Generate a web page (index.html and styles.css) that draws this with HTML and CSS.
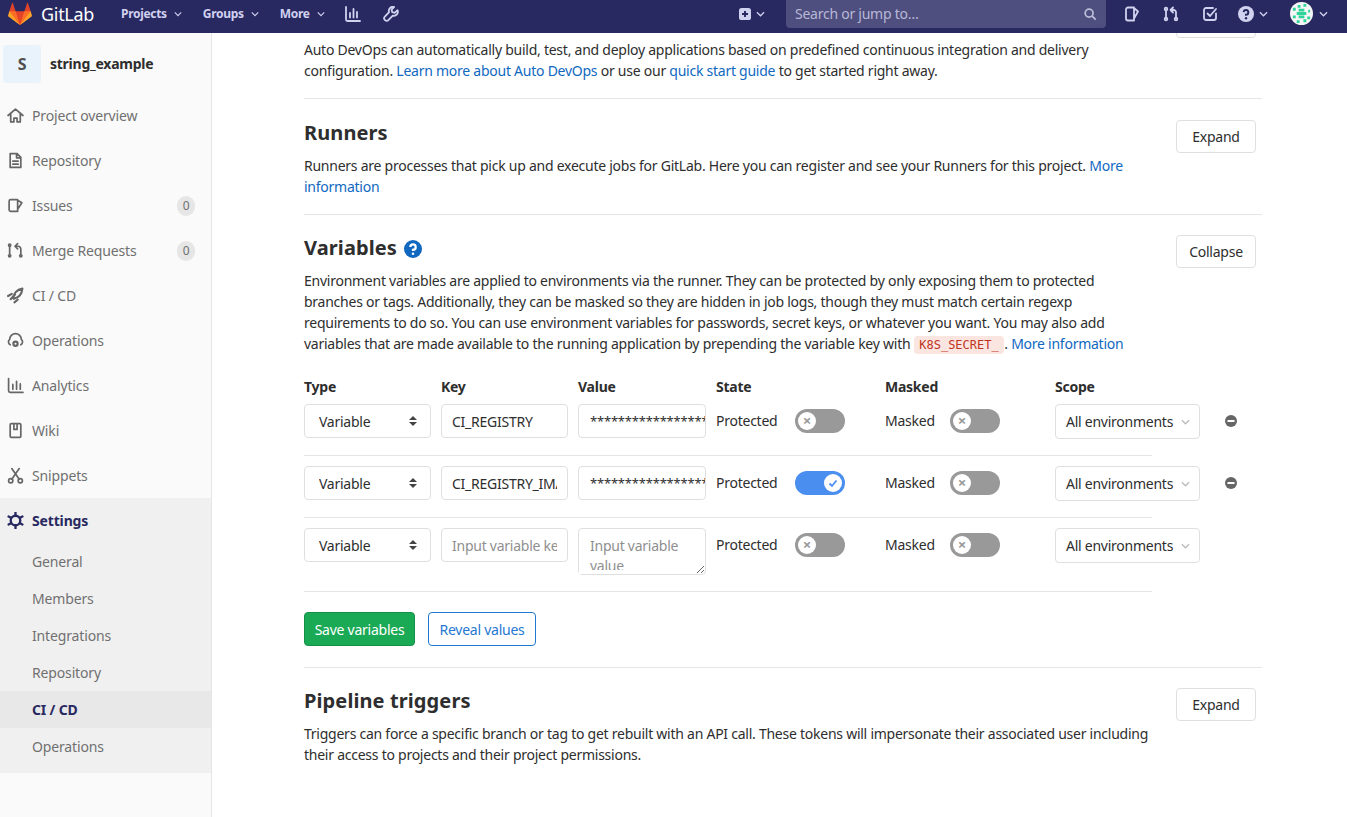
FILE: index.html

```html
<!DOCTYPE html>
<html lang="en">
<head>
    <meta charset="UTF-8">
    <meta name="viewport" content="width=device-width, initial-scale=1.0">
    <title>CI / CD Settings · string_example · GitLab</title>
    <link rel="stylesheet" href="styles.css">
</head>
<body>

<!-- Top navigation -->
<header class="navbar">
    <a class="brand">
        <svg class="brand-logo" viewBox="0 0 36 36">
            <path fill="#e24329" d="M2 14l9.38 9v-9l-4-12.28c-.205-.632-1.176-.632-1.38 0z"/>
            <path fill="#e24329" d="M34 14l-9.38 9v-9l4-12.28c.205-.632 1.176-.632 1.38 0z"/>
            <path fill="#e24329" d="M18 34.38 3 14h30z"/>
            <path fill="#fc6d26" d="M18 34.38 11.38 14H2l4 11z"/>
            <path fill="#fc6d26" d="M18 34.38 24.62 14H34l-4 11z"/>
            <path fill="#fca326" d="M2 14 .1 20.16c-.18.565 0 1.2.5 1.56l17.42 12.66z"/>
            <path fill="#fca326" d="M34 14l1.9 6.16c.18.565 0 1.2-.5 1.56L18 34.38z"/>
        </svg>
        <span class="brand-name">GitLab</span>
    </a>
    <nav class="nav-left">
        <a class="nav-link">Projects <svg class="caret" viewBox="0 0 10 6"><path d="M1 1l4 4 4-4"/></svg></a>
        <a class="nav-link">Groups <svg class="caret" viewBox="0 0 10 6"><path d="M1 1l4 4 4-4"/></svg></a>
        <a class="nav-link">More <svg class="caret" viewBox="0 0 10 6"><path d="M1 1l4 4 4-4"/></svg></a>
        <svg class="nav-icon chart" viewBox="0 0 16 16"><path d="M1 1v12.5a1.5 1.5 0 0 0 1.500 1.500H15M5 7v4.500M8.500 3v8.500M12 6v5.500"/></svg>
        <svg class="nav-icon wrench" viewBox="0 0 16 16"><path d="M14.500 4.200l-2.800 2.600-2.500-.7-.7-2.500 2.600-2.600a4 4 0 0 0-5 5.200L1.600 10.900a1.900 1.900 0 0 0 0 2.700l.8.800a1.900 1.900 0 0 0 2.700 0L9.800 9.700a4 4 0 0 0 4.700-5.500z"/></svg>
    </nav>
    <div class="nav-right">
        <a class="nav-plus">
            <svg class="plus-box" viewBox="0 0 14 14"><rect width="14" height="14" rx="3" fill="#d1d1f0"/><path d="M7 3.500v7M3.500 7h7" stroke="#292961" stroke-width="2.200"/></svg>
            <svg class="caret" viewBox="0 0 10 6"><path d="M1 1l4 4 4-4"/></svg>
        </a>
        <div class="search">
            <span>Search or jump to…</span>
            <svg class="search-icon" viewBox="0 0 16 16"><circle cx="7" cy="7" r="4.500"/><path d="M10.500 10.500l4 4"/></svg>
        </div>
        <svg class="nav-icon issues" viewBox="0 0 16 16"><path d="M10 1.500H4a2 2 0 0 0-2 2v9a2 2 0 0 0 2 2h6zM10 2l4 3.500-4 7"/></svg>
        <svg class="nav-icon merge" viewBox="0 0 16 16"><circle cx="3" cy="3" r="1.300"/><circle cx="3" cy="13" r="1.300"/><circle cx="13" cy="13" r="1.300"/><path d="M3 4.500v7M13 11.500V6.500a2.500 2.500 0 0 0-2.500-2.500H8M10 1.500 7.500 4l2.500 2.500"/></svg>
        <svg class="nav-icon todo" viewBox="0 0 16 16"><path d="M14 7.500V12a2 2 0 0 1-2 2H4a2 2 0 0 1-2-2V4a2 2 0 0 1 2-2h7M5.500 7.500 8 10l6-7"/></svg>
        <a class="nav-help">
            <svg class="help-icon" viewBox="0 0 16 16"><circle cx="8" cy="8" r="8" fill="#d1d1f0"/><path d="M5.700 6.200A2.300 2.300 0 1 1 8 8.700v1" fill="none" stroke="#292961" stroke-width="2"/><circle cx="8" cy="12.200" r="1.200" fill="#292961"/></svg>
            <svg class="caret" viewBox="0 0 10 6"><path d="M1 1l4 4 4-4"/></svg>
        </a>
        <a class="nav-user">
            <svg class="avatar" viewBox="0 0 24 24">
                <circle cx="12" cy="12" r="12" fill="#f6f6f6"/>
                <path fill="#2fd49b" d="M8 3h3v3H8zM14 2h3v3h-3zM3 6h3v3H3zM19 8h2v3h-2zM9 7h6v3H9zM7 10.500h10v3H7zM9 14h6v3H9zM3 14h3v3H3zM18 15h3v3h-3zM7 19h3v3H7zM14 18h3v3h-3z"/>
            </svg>
            <svg class="caret" viewBox="0 0 10 6"><path d="M1 1l4 4 4-4"/></svg>
        </a>
    </div>
</header>

<div class="layout">

    <!-- Project sidebar -->
    <aside class="sidebar">
        <div class="project-head">
            <div class="project-avatar">S</div>
            <div class="project-name">string_example</div>
        </div>
        <ul class="side-list">
            <li class="side-item">
                <svg class="side-icon" viewBox="0 0 16 16"><path d="M1 8 8 2l7 6M3.500 6.500V14h3v-3.500h3V14h3V6.500"/></svg>
                Project overview
            </li>
            <li class="side-item">
                <svg class="side-icon" viewBox="0 0 16 16"><path d="M3 1.500h6.500L13 5v9.500H3zM5.500 8.500h5M5.500 11.500h5M9 2v3.500h4"/></svg>
                Repository
            </li>
            <li class="side-item">
                <svg class="side-icon" viewBox="0 0 16 16"><path d="M10 2.500H3.500a1.500 1.500 0 0 0-1.500 1.500v8a1.500 1.500 0 0 0 1.500 1.500H10zM10 3l4 2.500-4 6"/></svg>
                Issues
                <span class="badge">0</span>
            </li>
            <li class="side-item">
                <svg class="side-icon" viewBox="0 0 16 16"><circle cx="2.500" cy="3" r="1"/><circle cx="2.500" cy="13" r="1"/><circle cx="13" cy="13" r="1"/><path d="M2.500 4v8M13 12V6.500A2.500 2.500 0 0 0 10.500 4H8M10 1.500 7.500 4 10 6.500"/></svg>
                Merge Requests
                <span class="badge">0</span>
            </li>
            <li class="side-item">
                <svg class="side-icon rocket" viewBox="0 0 16 16"><path d="M6 10.500C6 6 9.500 2.500 14.500 1.500c-.5 5-3.500 8.500-8 9.500zM1 8.500l3.500-2M7 14.500l3-2.500M3.500 11.500l4-4.500"/></svg>
                CI / CD
            </li>
            <li class="side-item">
                <svg class="side-icon" viewBox="0 0 16 16"><path d="M3 12A3 3 0 0 1 2.500 7 5.500 5.500 0 0 1 13.500 7a3 3 0 0 1-.5 5"/><circle cx="8" cy="11" r="2" stroke-width="2"/></svg>
                Operations
            </li>
            <li class="side-item">
                <svg class="side-icon" viewBox="0 0 16 16"><path d="M1.500 1.500V13a1.500 1.500 0 0 0 1.500 1.500h12M5.500 7v4.500M9 4v7.500M12.500 6.500v5"/></svg>
                Analytics
            </li>
            <li class="side-item">
                <svg class="side-icon" viewBox="0 0 16 16"><path d="M4 1.500h8a1 1 0 0 1 1 1v11a1 1 0 0 1-1 1H4a1 1 0 0 1-1-1v-11a1 1 0 0 1 1-1zM6.500 2v5h3V2" stroke-linejoin="round"/></svg>
                Wiki
            </li>
            <li class="side-item">
                <svg class="side-icon" viewBox="0 0 16 16"><circle cx="3.500" cy="13" r="2"/><circle cx="12.500" cy="13" r="2"/><path d="M4.500 11.500 11.500 1.500M11.500 11.500 4.500 1.500"/></svg>
                Snippets
            </li>
        </ul>
        <div class="side-active">
            <div class="side-item settings">
                <svg class="side-icon" viewBox="0 0 16 16"><circle cx="8" cy="8" r="4.500" stroke-width="2.200"/><path stroke-width="2.200" d="M8 .5v2.500M8 13v2.500M1.500 4.300l2.200 1.200M12.300 10.500l2.200 1.200M1.500 11.700l2.200-1.200M12.300 5.500l2.200-1.200"/></svg>
                Settings
            </div>
            <ul class="sub-list">
                <li class="sub-item">General</li>
                <li class="sub-item">Members</li>
                <li class="sub-item">Integrations</li>
                <li class="sub-item">Repository</li>
                <li class="sub-item current">CI / CD</li>
                <li class="sub-item">Operations</li>
            </ul>
        </div>
    </aside>

    <!-- Settings panels, scrolled part way down -->
    <main class="content">
        <section class="panel first-panel">
            <div class="panel-side">
                <p class="panel-text">Auto DevOps can automatically build, test, and deploy applications based on predefined continuous integration and delivery<br>configuration. <a class="link">Learn more about Auto DevOps</a> or use our <a class="link">quick start guide</a> to get started right away.</p>
            </div>
            <button class="btn btn-peek" tabindex="-1"></button>
        </section>

        <section class="panel panel-runners">
            <div class="panel-head">
                <h4 class="panel-title">Runners</h4>
                <button class="btn">Expand</button>
            </div>
            <p class="panel-text">Runners are processes that pick up and execute jobs for GitLab. Here you can register and see your Runners for this project. <a class="link">More<br>information</a></p>
        </section>

        <section class="panel">
            <div class="panel-head">
                <h4 class="panel-title">Variables
                    <svg class="title-help" viewBox="0 0 18 18"><circle cx="9" cy="9" r="9" fill="#1068bf"/><path d="M6.300 7a2.700 2.700 0 1 1 2.700 2.800v1.200" fill="none" stroke="#fff" stroke-width="2.200"/><circle cx="9" cy="13.700" r="1.300" fill="#fff"/></svg>
                </h4>
                <button class="btn">Collapse</button>
            </div>
            <p class="panel-text">Environment variables are applied to environments via the runner. They can be protected by only exposing them to protected<br>branches or tags. Additionally, they can be masked so they are hidden in job logs, though they must match certain regexp<br>requirements to do so. You can use environment variables for passwords, secret keys, or whatever you want. You may also add<br>variables that are made available to the running application by prepending the variable key with <code class="code-tag">K8S_SECRET_</code>. <a class="link">More information</a></p>

            <div class="var-table">
                <div class="var-row var-header">
                    <div>Type</div><div>Key</div><div>Value</div><div>State</div><div>Masked</div><div>Scope</div>
                </div>

                <div class="var-row">
                    <select class="field select"><option>Variable</option></select>
                    <input class="field" type="text" value="CI_REGISTRY">
                    <input class="field stars" type="text" value="**********************">
                    <div class="toggle-cell">Protected <span class="toggle"><span class="knob">×</span></span></div>
                    <div class="toggle-cell">Masked <span class="toggle masked-toggle"><span class="knob">×</span></span></div>
                    <button class="field scope">All environments <svg class="caret" viewBox="0 0 10 6"><path d="M1 1l4 4 4-4"/></svg></button>
                    <div class="remove-cell"><svg class="remove" viewBox="0 0 12 12"><circle cx="6" cy="6" r="6"/><rect x="2.500" y="5" width="7" height="2" fill="#fff"/></svg></div>
                </div>

                <div class="var-row">
                    <select class="field select"><option>Variable</option></select>
                    <input class="field" type="text" value="CI_REGISTRY_IMAGE">
                    <input class="field stars" type="text" value="**********************">
                    <div class="toggle-cell">Protected <span class="toggle is-on"><span class="knob"><svg viewBox="0 0 10 10"><path d="M1.500 5.500 4 8l4.500-5.500"/></svg></span></span></div>
                    <div class="toggle-cell">Masked <span class="toggle masked-toggle"><span class="knob">×</span></span></div>
                    <button class="field scope">All environments <svg class="caret" viewBox="0 0 10 6"><path d="M1 1l4 4 4-4"/></svg></button>
                    <div class="remove-cell"><svg class="remove" viewBox="0 0 12 12"><circle cx="6" cy="6" r="6"/><rect x="2.500" y="5" width="7" height="2" fill="#fff"/></svg></div>
                </div>

                <div class="var-row">
                    <select class="field select"><option>Variable</option></select>
                    <input class="field" type="text" placeholder="Input variable key">
                    <div class="value-wrap"><textarea class="field value-area" placeholder="Input variable value"></textarea></div>
                    <div class="toggle-cell">Protected <span class="toggle"><span class="knob">×</span></span></div>
                    <div class="toggle-cell">Masked <span class="toggle masked-toggle"><span class="knob">×</span></span></div>
                    <button class="field scope">All environments <svg class="caret" viewBox="0 0 10 6"><path d="M1 1l4 4 4-4"/></svg></button>
                </div>
            </div>

            <div class="var-actions">
                <button class="btn btn-save">Save variables</button>
                <button class="btn btn-reveal">Reveal values</button>
            </div>
        </section>

        <section class="panel">
            <div class="panel-head">
                <h4 class="panel-title">Pipeline triggers</h4>
                <button class="btn">Expand</button>
            </div>
            <p class="panel-text">Triggers can force a specific branch or tag to get rebuilt with an API call. These tokens will impersonate their associated user including<br>their access to projects and their project permissions.</p>
        </section>
    </main>
</div>

</body>
</html>
```

FILE: styles.css

```css
* { box-sizing: border-box; }
html, body { height: 100%; }
body { margin: 0; overflow: hidden; font-family: "Noto Sans", "Open Sans", sans-serif; font-size: 14px; letter-spacing: -0.25px; color: #2e2e2e; background-color: white; display: flex; flex-direction: column; }
ul { list-style: none; margin: 0; padding: 0; }

/* navbar */
.navbar { flex: none; height: 33px; padding-bottom: 6px; background-color: #292961; color: #d1d1f0; display: flex; align-items: center; position: relative; z-index: 2; }
.brand { display: flex; align-items: center; margin-left: 8px; width: 113px; color: white; }
.brand-logo { width: 24px; height: 24px; }
.brand-name { font-size: 18px; margin-left: 9px; letter-spacing: -0.3px; }
.nav-left { display: flex; align-items: center; }
.nav-link { display: flex; align-items: center; font-size: 12px; font-weight: 700; letter-spacing: -0.3px; margin-right: 21px; }
.caret { width: 9px; height: 6px; margin-left: 5px; fill: none; stroke: #d1d1f0; stroke-width: 1.4; flex: none; }
.nav-link .caret { margin-left: 7px; width: 8px; }
.nav-icon { width: 16px; height: 16px; fill: none; stroke: #d1d1f0; stroke-width: 1.8; stroke-linecap: round; stroke-linejoin: round; }
.chart { margin-left: -1px; }
.wrench { margin-left: 22px; }
.nav-right { margin-left: auto; display: flex; align-items: center; }
.nav-plus, .nav-help, .nav-user { display: flex; align-items: center; }
.plus-box { width: 12px; height: 12px; }
.search { align-self: flex-start; width: 320px; height: 29px; margin: 0 18px 0 21px; padding: 0 9px; background-color: #4f4f7f; border-radius: 0 0 4px 4px; display: flex; align-items: center; justify-content: space-between; color: #b8b8d8; }
.search-icon { width: 14px; height: 14px; fill: none; stroke: #bcbcd8; stroke-width: 2; }
.issues { margin-right: 23px; }
.merge { margin-right: 23px; }
.todo { margin-right: 20px; }
.help-icon { width: 16px; height: 16px; }
.nav-help { margin-right: 22px; }
.avatar { width: 23px; height: 23px; }
.nav-user { margin-right: 19px; }
.nav-user .caret { margin-left: 6px; }

/* layout */
.layout { flex: 1; min-height: 0; display: flex; }

/* sidebar */
.sidebar { flex: none; width: 212px; background-color: #fafafa; border-right: 1px solid #e5e5e5; }
.project-head { display: flex; align-items: center; padding: 1.5px 0 0 3px; height: 60px; }
.project-avatar { width: 38px; height: 38px; background-color: #e8f3fc; border-radius: 4px; font-size: 16px; font-weight: 700; color: #4f4f4f; display: flex; align-items: center; justify-content: center; }
.project-name { margin-left: 9px; font-weight: 700; font-size: 14px; color: #2e2e2e; }
.side-item { height: 45px; padding-left: 7px; display: flex; align-items: center; color: #707070; letter-spacing: -0.15px; }
.side-icon { width: 17px; height: 17px; margin-right: 8px; fill: none; stroke: #666; stroke-width: 1.600; stroke-linecap: round; stroke-linejoin: round; flex: none; }
.rocket { stroke-width: 2; }
.badge { margin-left: auto; margin-right: 16px; width: 18px; height: 20px; border-radius: 10px; background-color: #e6e6e6; font-size: 12px; display: flex; align-items: center; justify-content: center; color: #707070; }
.side-active { background-color: #f0f0f0; padding-bottom: 8px; }
.settings { color: #292961; font-weight: 700; }
.settings .side-icon { stroke: #292961; }
.sub-item { height: 37px; padding-left: 32px; display: flex; align-items: center; color: #707070; letter-spacing: -0.15px; }
.current { background-color: #e8e8e8; color: #292961; font-weight: 700; }

/* panels */
.content { flex: 1; min-width: 0; padding: 0 85px 0 92px; overflow: hidden; }
.panel { border-bottom: 1px solid #e5e5e5; padding: 20px 0 17px; }
.panel-runners { padding-top: 21px; }
.panel:last-child { border-bottom: none; }
.first-panel { height: 66px; padding: 0; display: flex; justify-content: space-between; position: relative; }
.panel-side { padding-top: 6px; }
.panel-head { display: flex; justify-content: space-between; align-items: flex-start; height: 35px; padding-right: 6px; }
.panel-title { margin: 0; font-size: 20px; font-weight: 700; line-height: 26px; letter-spacing: 0.1px; display: flex; align-items: center; gap: 7px; }
.title-help { width: 18px; height: 18px; margin-top: 2px; }
.panel-text { margin: 0; line-height: 21px; white-space: nowrap; }
.link { color: #1068bf; }
.code-tag { font-family: "DejaVu Sans Mono", monospace; font-size: 12px; letter-spacing: 0; padding: 2px 5.500px; color: #c0341d; background-color: #fbe5e1; border-radius: 4px; }

.btn { font-family: inherit; font-size: 14px; letter-spacing: -0.25px; width: 80px; height: 33px; padding: 0; color: #2e2e2e; background-color: white; border: 1px solid #dfdfdf; border-radius: 4px; }
.btn-peek { position: absolute; right: 6px; top: -28px; }
.btn-save { width: 111px; height: 34px; color: white; background-color: #1aaa55; border-color: #168f48; }
.btn-reveal { width: 108px; height: 34px; color: #1f78d1; border-color: #1f78d1; }

/* variables table */
.var-table { margin-top: 20px; width: 848px; }
.var-row { display: grid; grid-template-columns: 127px 127px 128px 159px 160px 145px 37px; column-gap: 10px; align-items: start; padding: 10px 0 16px; border-bottom: 1px solid #e5e5e5; }
.var-row.var-header { padding: 0; height: 21px; border-bottom: none; font-weight: 700; line-height: 21px; margin-bottom: 7px; }
.var-header + .var-row { padding-top: 0; }
.field { font-family: inherit; font-size: 14px; letter-spacing: -0.25px; height: 34px; width: 100%; padding: 6px 10px; color: #2e2e2e; background-color: white; border: 1px solid #dfdfdf; border-radius: 4px; outline: none; }
.field::placeholder { color: #8f8f8f; opacity: 1; }
.select { appearance: none; padding-left: 14px; background-image: url("data:image/svg+xml,%3Csvg xmlns='http://www.w3.org/2000/svg' width='8' height='10'%3E%3Cpath d='M4 0l4 4H0zM4 10L0 6h8z' fill='%23444'/%3E%3C/svg%3E"); background-repeat: no-repeat; background-position: right 13px center; }
.stars { letter-spacing: -0.2px; padding-left: 11px; padding-right: 0; font-size: 13px; }
.value-wrap { position: relative; height: 47px; }
.value-wrap::after { content: ""; position: absolute; left: 1px; right: 14px; bottom: 1px; height: 4.500px; background-color: white; }
.value-area { height: 47px; display: block; overflow: hidden; line-height: 20px; padding: 7px 11px 0; }
.toggle-cell { height: 34px; display: flex; align-items: center; justify-content: space-between; padding-right: 30px; padding-bottom: 1px; }
.toggle-cell:nth-child(5) { padding-right: 45px; }
.toggle { width: 50px; height: 24px; padding: 3px; border-radius: 12px; background-color: #999; display: flex; }
.toggle.is-on { background-color: #4a8ff0; justify-content: flex-end; }
.knob { width: 18px; height: 18px; border-radius: 50%; background-color: white; color: #999; font-size: 15px; font-weight: 700; line-height: 17px; letter-spacing: 0; text-align: center; display: flex; align-items: center; justify-content: center; }
.knob svg { width: 10px; height: 10px; fill: none; stroke: #4a8ff0; stroke-width: 1.800; }
.scope { display: flex; align-items: center; justify-content: space-between; padding: 0 9px 0 10px; height: 35px; }
.scope .caret { stroke: #bbb; }
.remove-cell { height: 34px; padding-left: 15px; display: flex; align-items: center; }
.remove { width: 12px; height: 12px; fill: #666; }
.var-actions { display: flex; gap: 13px; margin-top: 20px; padding-bottom: 4px; }
```
